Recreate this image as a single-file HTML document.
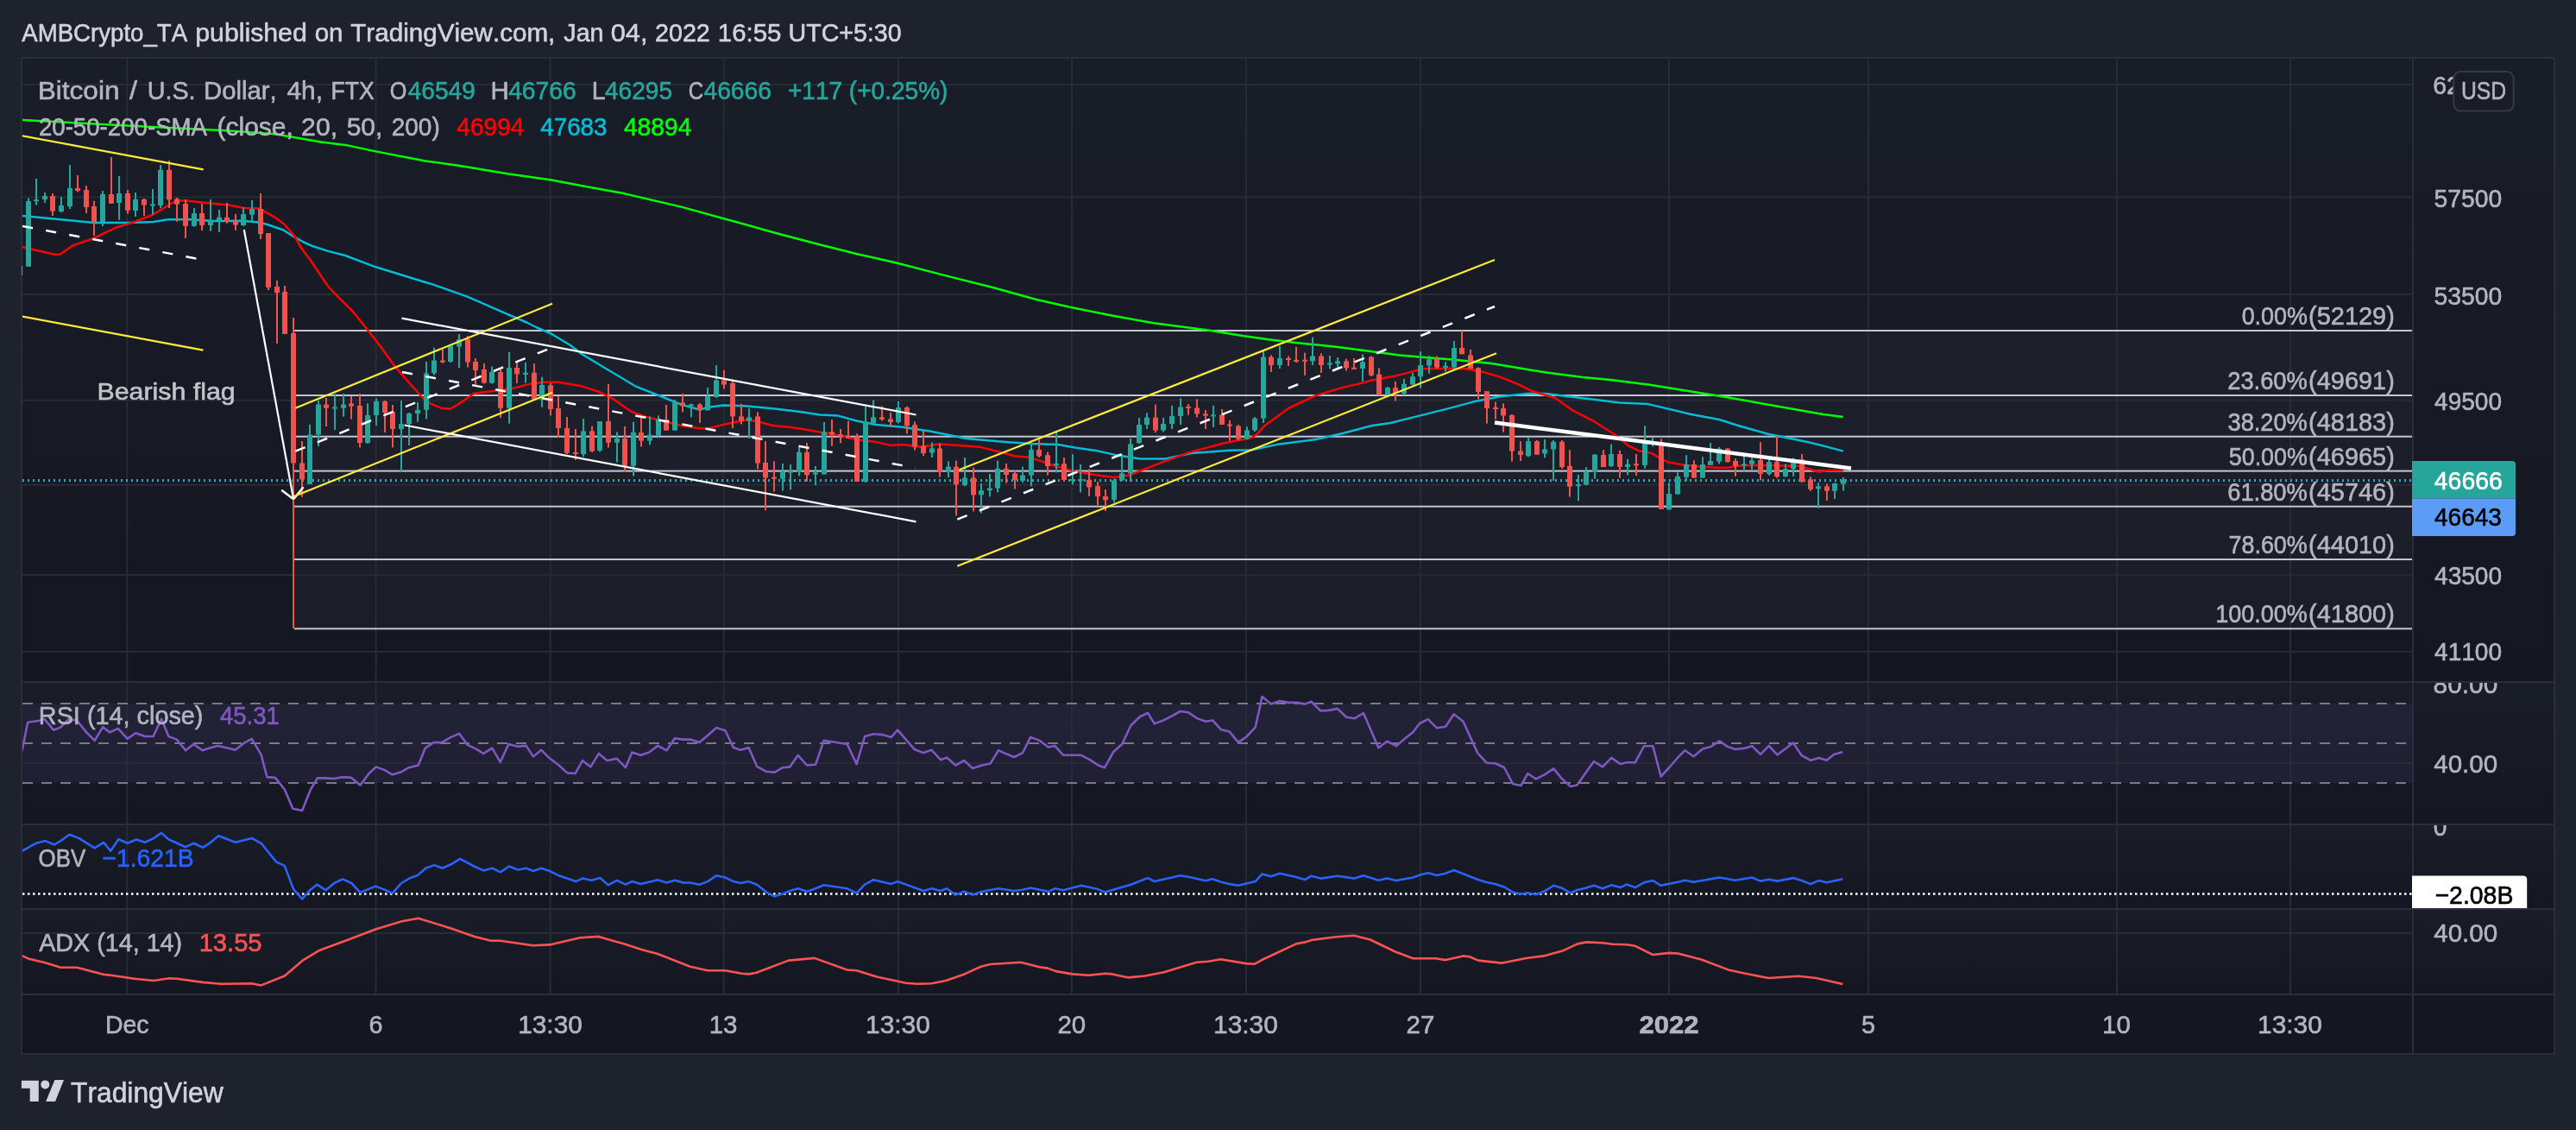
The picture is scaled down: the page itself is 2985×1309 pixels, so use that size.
<!DOCTYPE html>
<html><head><meta charset="utf-8"><style>
html,body{margin:0;padding:0;background:#1e222d;width:2985px;height:1309px;overflow:hidden}
svg{position:absolute;left:0;top:0;will-change:transform}
text{font-family:"Liberation Sans",sans-serif;white-space:pre;font-kerning:none}
</style></head><body>
<svg width="2985" height="1309" viewBox="0 0 2985 1309">
<rect x="24" y="66" width="2937" height="1156" fill="#2a2e39"/><defs><linearGradient id="bgg" x1="0" y1="0" x2="0" y2="1"><stop offset="0" stop-color="#191d28"/><stop offset="1" stop-color="#141721"/></linearGradient></defs><rect x="26" y="68" width="2933" height="721" fill="url(#bgg)"/><rect x="26" y="791" width="2933" height="163" fill="url(#bgg)"/><rect x="26" y="956" width="2933" height="96" fill="url(#bgg)"/><rect x="26" y="1054" width="2933" height="97" fill="url(#bgg)"/><rect x="26" y="1153" width="2933" height="67" fill="#141721"/><rect x="26" y="815" width="2769" height="92" fill="#7e57c2" fill-opacity="0.1"/><rect x="341" y="383" width="2454" height="345.5" fill="#ffffff" fill-opacity="0.028"/><g fill="#272b36"><rect x="146.3" y="68" width="2" height="1083"/><rect x="434.6" y="68" width="2" height="1083"/><rect x="636.7" y="68" width="2" height="1083"/><rect x="837.6" y="68" width="2" height="1083"/><rect x="1040.0" y="68" width="2" height="1083"/><rect x="1241.0" y="68" width="2" height="1083"/><rect x="1443.0" y="68" width="2" height="1083"/><rect x="1645.0" y="68" width="2" height="1083"/><rect x="1933.0" y="68" width="2" height="1083"/><rect x="2164.0" y="68" width="2" height="1083"/><rect x="2452.0" y="68" width="2" height="1083"/><rect x="2653.0" y="68" width="2" height="1083"/><rect x="26" y="97.0" width="2769" height="2"/><rect x="26" y="227.4" width="2769" height="2"/><rect x="26" y="340.0" width="2769" height="2"/><rect x="26" y="462.7" width="2769" height="2"/><rect x="26" y="560.6" width="2769" height="2"/><rect x="26" y="665.0" width="2769" height="2"/><rect x="26" y="753.9" width="2769" height="2"/><rect x="26" y="883" width="2769" height="2"/><rect x="26" y="1080" width="2769" height="2"/></g><line x1="26" y1="815" x2="2795" y2="815" stroke="#787b86" stroke-width="2" stroke-dasharray="12 10"/><line x1="26" y1="861" x2="2795" y2="861" stroke="#787b86" stroke-width="2" stroke-dasharray="12 10"/><line x1="26" y1="907" x2="2795" y2="907" stroke="#787b86" stroke-width="2" stroke-dasharray="12 10"/><defs><clipPath id="cm"><rect x="26" y="68" width="2769" height="721"/></clipPath><clipPath id="cr"><rect x="26" y="791" width="2769" height="163"/></clipPath><clipPath id="co"><rect x="26" y="956" width="2769" height="96"/></clipPath><clipPath id="ca"><rect x="26" y="1054" width="2769" height="97"/></clipPath><clipPath id="axr"><rect x="2797" y="791" width="162" height="163"/></clipPath><clipPath id="axo"><rect x="2795" y="956" width="164" height="96"/></clipPath></defs><g clip-path="url(#cm)"><rect x="341" y="382.0" width="2454" height="2" fill="#c3c6d0"/><rect x="341" y="457.0" width="2454" height="2" fill="#c3c6d0"/><rect x="341" y="504.7" width="2454" height="2" fill="#c3c6d0"/><rect x="341" y="544.6" width="2454" height="2" fill="#c3c6d0"/><rect x="341" y="585.7" width="2454" height="2" fill="#c3c6d0"/><rect x="341" y="647.0" width="2454" height="2" fill="#c3c6d0"/><rect x="341" y="727.3" width="2454" height="2" fill="#c3c6d0"/><line x1="26" y1="557.3" x2="2795" y2="557.3" stroke="#5b9cf6" stroke-width="1.5" stroke-dasharray="2 4"/><line x1="26" y1="556" x2="2795" y2="556" stroke="#26a69a" stroke-width="2" stroke-dasharray="2 4"/><polyline points="25.2,138.9 132.8,144.7 185.9,147.4 265.5,151.4 318.6,155.3 334.6,158.0 371.7,164.6 400.0,167.9 435.4,175.4 492.9,186.5 532.7,192.0 588.0,201.3 638.9,208.6 681.0,216.4 723.0,224.1 789.4,239.6 853.5,257.3 900.0,270.2 948.5,283.0 993.2,294.3 1039.8,304.7 1094.1,318.9 1152.3,333.5 1200.9,347.0 1239.7,355.8 1288.2,365.5 1336.7,374.2 1400.0,382.4 1439.9,389.1 1471.7,393.4 1503.6,397.2 1546.0,401.4 1590.0,407.2 1621.9,411.4 1653.7,414.2 1685.6,416.7 1728.0,421.0 1759.9,426.3 1791.7,431.6 1834.2,436.9 1866.0,440.1 1910.0,445.4 2000.0,460.0 2112.8,480.0 2135.8,482.9" fill="none" stroke="#00ff00" stroke-width="2.5" stroke-linejoin="round"/><polyline points="26.0,250.0 70.2,254.3 109.2,257.9 149.9,257.9 178.2,257.0 194.1,254.3 220.7,254.3 247.2,256.1 280.0,255.8 299.1,257.4 308.7,259.8 327.8,266.2 340.5,274.1 351.7,280.5 362.8,285.3 380.0,290.9 400.0,296.0 435.4,309.3 492.9,327.0 501.8,329.6 541.6,343.6 579.2,360.2 610.2,373.5 621.2,379.0 638.9,386.7 661.0,400.0 672.5,409.1 704.3,428.2 736.2,447.3 768.0,460.0 789.3,468.6 810.5,474.5 821.1,471.8 838.1,469.6 863.6,470.3 895.4,473.2 927.3,477.0 950.0,480.4 971.2,481.6 992.5,487.5 1013.7,491.8 1045.6,494.8 1077.4,499.6 1119.9,508.1 1162.4,511.7 1194.2,513.9 1226.0,515.1 1247.3,518.7 1270.0,522.0 1295.5,527.6 1321.0,531.4 1350.7,531.4 1380.4,525.0 1425.0,521.8 1450.5,521.2 1482.4,514.4 1524.8,509.1 1556.7,501.7 1590.0,493.0 1611.2,490.0 1636.7,483.6 1674.9,474.1 1706.8,465.6 1738.7,459.2 1770.5,456.0 1791.7,456.0 1813.0,458.8 1844.8,462.4 1876.7,466.6 1910.0,468.1 1959.8,480.0 1992.0,486.0 2015.0,493.2 2049.6,503.0 2072.6,507.6 2095.6,512.2 2116.3,517.4 2135.8,522.6" fill="none" stroke="#00bcd4" stroke-width="2.5" stroke-linejoin="round"/><polyline points="26.0,286.2 63.2,294.7 69.4,294.7 84.4,284.4 107.4,276.5 135.7,263.2 153.4,257.9 176.4,249.0 203.0,233.0 213.6,232.2 238.4,234.9 265.0,237.5 282.6,241.0 300.7,241.5 311.8,247.9 319.8,252.6 329.4,259.8 340.5,272.5 350.0,288.5 359.6,301.2 369.2,315.5 380.0,331.5 388.0,340.0 409.2,361.2 426.2,382.5 441.0,401.6 458.0,425.0 472.9,442.0 489.9,461.0 498.4,467.4 511.1,472.7 521.7,473.8 532.4,467.4 549.3,455.7 574.8,452.5 596.0,449.4 613.0,445.1 630.0,442.7 647.0,442.7 672.5,446.9 693.7,453.7 710.7,462.2 731.9,477.0 746.8,482.4 768.0,487.7 789.3,493.0 810.5,496.2 821.1,496.2 842.4,490.9 863.6,486.6 876.3,487.7 895.4,493.0 916.7,495.1 931.6,497.2 950.0,500.4 971.2,503.9 992.5,509.2 1013.7,511.7 1032.8,516.0 1045.6,515.1 1066.8,517.7 1088.0,514.5 1119.9,516.6 1136.9,518.1 1162.4,524.5 1175.1,528.3 1190.0,529.4 1204.8,533.6 1226.0,541.0 1247.3,546.4 1270.0,550.3 1291.2,553.0 1308.2,550.5 1338.0,538.8 1376.2,524.6 1418.7,513.3 1450.5,507.0 1456.9,502.7 1465.4,493.2 1493.0,473.0 1524.8,458.1 1556.7,448.6 1571.6,445.4 1590.0,440.5 1615.5,435.8 1632.5,431.6 1647.3,427.3 1664.3,426.9 1696.2,426.9 1717.4,430.5 1738.7,436.9 1759.9,445.4 1774.8,452.8 1802.4,461.3 1823.6,476.2 1844.8,486.8 1870.3,502.7 1887.3,516.5 1900.0,522.6 1913.8,524.9 1923.0,530.6 1932.2,535.2 1950.6,538.4 1969.0,540.4 1992.0,542.1 2003.5,541.6 2015.0,539.6 2038.0,538.9 2061.0,539.6 2084.0,539.8 2095.6,543.0 2107.0,546.5 2118.6,545.0 2135.8,545.0" fill="none" stroke="#ff0000" stroke-width="2.5" stroke-linejoin="round"/><g fill="#26a69a"><rect x="32" y="229.6" width="2" height="79.4"/><rect x="30" y="233.0" width="6" height="75.8"/><rect x="41" y="207.0" width="2" height="30.5"/><rect x="39" y="231.2" width="6" height="2.0"/><rect x="51" y="223.0" width="2" height="12.0"/><rect x="49" y="227.0" width="6" height="4.0"/><rect x="70" y="228.0" width="2" height="18.0"/><rect x="68" y="238.0" width="6" height="7.0"/><rect x="80" y="191.0" width="2" height="51.0"/><rect x="78" y="218.0" width="6" height="21.0"/><rect x="118" y="221.0" width="2" height="41.0"/><rect x="116" y="225.0" width="6" height="32.0"/><rect x="137" y="204.0" width="2" height="50.7"/><rect x="135" y="224.0" width="6" height="11.0"/><rect x="156" y="223.0" width="2" height="28.0"/><rect x="154" y="231.0" width="6" height="13.0"/><rect x="176" y="219.0" width="2" height="29.7"/><rect x="174" y="236.5" width="6" height="2.0"/><rect x="185" y="191.0" width="2" height="50.0"/><rect x="183" y="196.8" width="6" height="41.2"/><rect x="224" y="241.0" width="2" height="21.8"/><rect x="222" y="247.0" width="6" height="14.8"/><rect x="243" y="231.0" width="2" height="36.6"/><rect x="241" y="255.0" width="6" height="6.0"/><rect x="253" y="243.0" width="2" height="26.0"/><rect x="251" y="251.7" width="6" height="3.3"/><rect x="281" y="240.0" width="2" height="21.8"/><rect x="279" y="248.0" width="6" height="13.0"/><rect x="291" y="232.0" width="2" height="24.5"/><rect x="289" y="242.0" width="6" height="6.7"/><rect x="358" y="491.8" width="2" height="69.0"/><rect x="356" y="503.5" width="6" height="57.3"/><rect x="368" y="464.0" width="2" height="53.0"/><rect x="366" y="468.5" width="6" height="35.0"/><rect x="387" y="456.0" width="2" height="42.0"/><rect x="385" y="471.5" width="6" height="2.0"/><rect x="397" y="456.0" width="2" height="26.7"/><rect x="395" y="468.5" width="6" height="4.2"/><rect x="425" y="467.4" width="2" height="46.6"/><rect x="423" y="481.0" width="6" height="32.0"/><rect x="435" y="461.5" width="2" height="31.5"/><rect x="433" y="464.9" width="6" height="16.1"/><rect x="464" y="464.0" width="2" height="82.0"/><rect x="462" y="491.0" width="6" height="6.0"/><rect x="473" y="478.0" width="2" height="38.0"/><rect x="471" y="479.0" width="6" height="12.0"/><rect x="483" y="466.0" width="2" height="22.7"/><rect x="481" y="474.8" width="6" height="4.2"/><rect x="493" y="419.0" width="2" height="66.5"/><rect x="491" y="432.4" width="6" height="42.4"/><rect x="502" y="402.6" width="2" height="31.9"/><rect x="500" y="417.5" width="6" height="14.9"/><rect x="521" y="399.5" width="2" height="20.5"/><rect x="519" y="400.5" width="6" height="18.5"/><rect x="531" y="387.0" width="2" height="39.0"/><rect x="529" y="393.0" width="6" height="8.6"/><rect x="569" y="424.5" width="2" height="20.0"/><rect x="567" y="431.0" width="6" height="12.6"/><rect x="589" y="408.0" width="2" height="82.8"/><rect x="587" y="426.0" width="6" height="46.7"/><rect x="608" y="420.0" width="2" height="23.6"/><rect x="606" y="431.9" width="6" height="2.0"/><rect x="627" y="436.6" width="2" height="35.1"/><rect x="625" y="446.0" width="6" height="16.7"/><rect x="675" y="485.0" width="2" height="44.0"/><rect x="673" y="499.4" width="6" height="26.6"/><rect x="694" y="488.0" width="2" height="35.4"/><rect x="692" y="488.0" width="6" height="34.0"/><rect x="714" y="500.4" width="2" height="35.1"/><rect x="712" y="507.9" width="6" height="4.8"/><rect x="733" y="488.7" width="2" height="62.7"/><rect x="731" y="500.9" width="6" height="38.8"/><rect x="752" y="482.4" width="2" height="32.9"/><rect x="750" y="503.6" width="6" height="7.0"/><rect x="762" y="481.3" width="2" height="24.4"/><rect x="760" y="486.0" width="6" height="18.7"/><rect x="781" y="463.0" width="2" height="35.7"/><rect x="779" y="466.4" width="6" height="32.3"/><rect x="800" y="467.5" width="2" height="15.9"/><rect x="798" y="468.5" width="6" height="2.0"/><rect x="819" y="449.0" width="2" height="26.4"/><rect x="817" y="459.0" width="6" height="16.4"/><rect x="829" y="423.0" width="2" height="38.0"/><rect x="827" y="440.5" width="6" height="19.5"/><rect x="867" y="473.0" width="2" height="34.9"/><rect x="865" y="483.4" width="6" height="4.3"/><rect x="906" y="537.0" width="2" height="31.4"/><rect x="904" y="546.0" width="6" height="8.6"/><rect x="915" y="538.0" width="2" height="29.3"/><rect x="913" y="545.5" width="6" height="2.0"/><rect x="925" y="517.0" width="2" height="34.4"/><rect x="923" y="523.8" width="6" height="23.2"/><rect x="944" y="540.0" width="2" height="22.0"/><rect x="942" y="547.5" width="6" height="2.0"/><rect x="954" y="489.0" width="2" height="60.5"/><rect x="952" y="500.3" width="6" height="49.2"/><rect x="1002" y="470.5" width="2" height="88.5"/><rect x="1000" y="488.4" width="6" height="69.6"/><rect x="1011" y="463.5" width="2" height="27.5"/><rect x="1009" y="483.3" width="6" height="7.2"/><rect x="1040" y="465.0" width="2" height="25.5"/><rect x="1038" y="472.0" width="6" height="17.0"/><rect x="1079" y="512.4" width="2" height="17.6"/><rect x="1077" y="519.4" width="6" height="5.1"/><rect x="1098" y="534.2" width="2" height="19.2"/><rect x="1096" y="540.6" width="6" height="5.8"/><rect x="1117" y="530.0" width="2" height="33.3"/><rect x="1115" y="553.4" width="6" height="8.5"/><rect x="1136" y="560.0" width="2" height="34.6"/><rect x="1134" y="568.2" width="6" height="5.1"/><rect x="1146" y="549.0" width="2" height="26.4"/><rect x="1144" y="565.5" width="6" height="2.7"/><rect x="1155" y="533.6" width="2" height="36.8"/><rect x="1153" y="542.7" width="6" height="22.8"/><rect x="1184" y="540.6" width="2" height="18.4"/><rect x="1182" y="550.6" width="6" height="6.4"/><rect x="1194" y="512.4" width="2" height="50.9"/><rect x="1192" y="520.9" width="6" height="29.7"/><rect x="1223" y="500.3" width="2" height="47.1"/><rect x="1221" y="537.0" width="6" height="2.0"/><rect x="1242" y="526.2" width="2" height="35.0"/><rect x="1240" y="555.0" width="6" height="2.0"/><rect x="1251" y="537.9" width="2" height="32.5"/><rect x="1249" y="555.0" width="6" height="2.0"/><rect x="1290" y="554.7" width="2" height="27.7"/><rect x="1288" y="556.5" width="6" height="22.7"/><rect x="1299" y="526.0" width="2" height="31.0"/><rect x="1297" y="548.4" width="6" height="8.1"/><rect x="1309" y="508.0" width="2" height="50.0"/><rect x="1307" y="514.4" width="6" height="34.0"/><rect x="1319" y="484.0" width="2" height="30.0"/><rect x="1317" y="492.0" width="6" height="21.3"/><rect x="1328" y="478.3" width="2" height="18.7"/><rect x="1326" y="483.6" width="6" height="8.4"/><rect x="1347" y="484.0" width="2" height="16.6"/><rect x="1345" y="491.0" width="6" height="7.5"/><rect x="1357" y="469.8" width="2" height="27.2"/><rect x="1355" y="482.0" width="6" height="9.0"/><rect x="1367" y="461.3" width="2" height="30.7"/><rect x="1365" y="471.5" width="6" height="10.5"/><rect x="1405" y="469.8" width="2" height="25.1"/><rect x="1403" y="480.5" width="6" height="2.0"/><rect x="1444" y="494.2" width="2" height="14.8"/><rect x="1442" y="498.5" width="6" height="10.0"/><rect x="1453" y="483.0" width="2" height="17.0"/><rect x="1451" y="484.7" width="6" height="13.8"/><rect x="1463" y="405.0" width="2" height="85.0"/><rect x="1461" y="413.5" width="6" height="71.2"/><rect x="1482" y="400.8" width="2" height="26.2"/><rect x="1480" y="415.0" width="6" height="8.0"/><rect x="1520" y="390.8" width="2" height="32.2"/><rect x="1518" y="412.5" width="6" height="5.9"/><rect x="1540" y="412.0" width="2" height="15.3"/><rect x="1538" y="420.5" width="6" height="2.0"/><rect x="1549" y="414.0" width="2" height="11.6"/><rect x="1547" y="418.4" width="6" height="3.0"/><rect x="1578" y="410.3" width="2" height="31.7"/><rect x="1576" y="419.3" width="6" height="7.7"/><rect x="1607" y="448.0" width="2" height="10.0"/><rect x="1605" y="449.0" width="6" height="8.5"/><rect x="1626" y="439.0" width="2" height="18.5"/><rect x="1624" y="444.8" width="6" height="11.2"/><rect x="1636" y="432.0" width="2" height="14.0"/><rect x="1634" y="436.3" width="6" height="9.1"/><rect x="1645" y="407.0" width="2" height="42.6"/><rect x="1643" y="423.0" width="6" height="13.3"/><rect x="1655" y="412.0" width="2" height="20.6"/><rect x="1653" y="416.3" width="6" height="7.2"/><rect x="1674" y="419.3" width="2" height="11.2"/><rect x="1672" y="423.8" width="6" height="2.0"/><rect x="1684" y="395.0" width="2" height="33.4"/><rect x="1682" y="403.0" width="6" height="22.6"/><rect x="1770" y="507.0" width="2" height="22.3"/><rect x="1768" y="511.2" width="6" height="17.0"/><rect x="1789" y="509.0" width="2" height="21.3"/><rect x="1787" y="520.4" width="6" height="5.0"/><rect x="1799" y="510.0" width="2" height="46.9"/><rect x="1797" y="511.9" width="6" height="8.5"/><rect x="1828" y="550.0" width="2" height="30.2"/><rect x="1826" y="561.2" width="6" height="2.0"/><rect x="1837" y="541.0" width="2" height="21.2"/><rect x="1835" y="546.3" width="6" height="15.2"/><rect x="1847" y="526.0" width="2" height="28.7"/><rect x="1845" y="526.7" width="6" height="19.6"/><rect x="1866" y="514.4" width="2" height="26.6"/><rect x="1864" y="526.0" width="6" height="13.9"/><rect x="1885" y="531.8" width="2" height="18.7"/><rect x="1883" y="537.8" width="6" height="3.2"/><rect x="1905" y="493.2" width="2" height="49.5"/><rect x="1903" y="513.4" width="6" height="25.5"/><rect x="1914" y="507.0" width="2" height="10.4"/><rect x="1912" y="511.8" width="6" height="2.0"/><rect x="1933" y="559.0" width="2" height="31.4"/><rect x="1931" y="572.0" width="6" height="18.2"/><rect x="1943" y="547.3" width="2" height="25.3"/><rect x="1941" y="551.9" width="6" height="20.7"/><rect x="1953" y="527.2" width="2" height="30.1"/><rect x="1951" y="538.0" width="6" height="14.7"/><rect x="1972" y="529.2" width="2" height="24.4"/><rect x="1970" y="538.0" width="6" height="15.6"/><rect x="1981" y="513.0" width="2" height="25.9"/><rect x="1979" y="534.0" width="6" height="4.9"/><rect x="1991" y="518.0" width="2" height="19.5"/><rect x="1989" y="519.7" width="6" height="14.9"/><rect x="2020" y="527.2" width="2" height="18.4"/><rect x="2018" y="537.4" width="6" height="2.0"/><rect x="2029" y="530.4" width="2" height="13.5"/><rect x="2027" y="533.5" width="6" height="4.0"/><rect x="2049" y="529.5" width="2" height="21.3"/><rect x="2047" y="535.2" width="6" height="13.8"/><rect x="2068" y="537.3" width="2" height="15.4"/><rect x="2066" y="543.0" width="6" height="8.9"/><rect x="2077" y="530.4" width="2" height="21.5"/><rect x="2075" y="531.8" width="6" height="11.2"/><rect x="2106" y="559.2" width="2" height="29.5"/><rect x="2104" y="563.4" width="6" height="2.9"/><rect x="2125" y="559.2" width="2" height="18.8"/><rect x="2123" y="560.0" width="6" height="8.6"/><rect x="2135" y="553.0" width="2" height="15.6"/><rect x="2133" y="555.4" width="6" height="5.1"/></g><g fill="#ef5350"><rect x="60" y="224.0" width="2" height="26.0"/><rect x="58" y="227.0" width="6" height="17.6"/><rect x="89" y="203.0" width="2" height="19.5"/><rect x="87" y="218.0" width="6" height="3.0"/><rect x="99" y="215.0" width="2" height="32.0"/><rect x="97" y="220.0" width="6" height="20.0"/><rect x="108" y="232.7" width="2" height="40.3"/><rect x="106" y="239.0" width="6" height="18.0"/><rect x="128" y="182.0" width="2" height="54.0"/><rect x="126" y="225.0" width="6" height="10.8"/><rect x="147" y="220.0" width="2" height="27.6"/><rect x="145" y="224.0" width="6" height="19.7"/><rect x="166" y="230.0" width="2" height="20.0"/><rect x="164" y="231.0" width="6" height="6.5"/><rect x="195" y="186.0" width="2" height="55.0"/><rect x="193" y="196.8" width="6" height="34.5"/><rect x="204" y="229.0" width="2" height="28.0"/><rect x="202" y="230.4" width="6" height="6.2"/><rect x="214" y="231.0" width="2" height="45.0"/><rect x="212" y="236.0" width="6" height="25.8"/><rect x="233" y="236.0" width="2" height="31.0"/><rect x="231" y="247.0" width="6" height="14.0"/><rect x="262" y="235.0" width="2" height="23.8"/><rect x="260" y="251.7" width="6" height="5.3"/><rect x="272" y="248.0" width="2" height="19.0"/><rect x="270" y="255.8" width="6" height="4.7"/><rect x="301" y="224.0" width="2" height="53.0"/><rect x="299" y="242.0" width="6" height="29.0"/><rect x="310" y="270.0" width="2" height="66.0"/><rect x="308" y="270.0" width="6" height="63.0"/><rect x="320" y="325.0" width="2" height="73.0"/><rect x="318" y="332.0" width="6" height="7.0"/><rect x="329" y="331.0" width="2" height="56.0"/><rect x="327" y="338.0" width="6" height="49.0"/><rect x="339" y="368.0" width="2" height="360.0"/><rect x="337" y="386.0" width="6" height="150.4"/><rect x="349" y="511.0" width="2" height="64.7"/><rect x="347" y="536.4" width="6" height="19.1"/><rect x="377" y="461.0" width="2" height="33.0"/><rect x="375" y="468.5" width="6" height="4.2"/><rect x="406" y="459.0" width="2" height="26.5"/><rect x="404" y="467.4" width="6" height="3.2"/><rect x="416" y="456.0" width="2" height="62.4"/><rect x="414" y="470.0" width="6" height="43.0"/><rect x="445" y="464.0" width="2" height="37.0"/><rect x="443" y="464.9" width="6" height="13.1"/><rect x="454" y="469.0" width="2" height="49.4"/><rect x="452" y="477.0" width="6" height="20.0"/><rect x="512" y="404.8" width="2" height="15.9"/><rect x="510" y="417.5" width="6" height="2.1"/><rect x="541" y="389.0" width="2" height="36.4"/><rect x="539" y="393.0" width="6" height="26.6"/><rect x="550" y="415.0" width="2" height="31.0"/><rect x="548" y="419.0" width="6" height="10.0"/><rect x="560" y="421.0" width="2" height="23.5"/><rect x="558" y="428.0" width="6" height="15.6"/><rect x="579" y="427.5" width="2" height="56.5"/><rect x="577" y="431.0" width="6" height="41.7"/><rect x="598" y="419.6" width="2" height="24.4"/><rect x="596" y="426.0" width="6" height="7.4"/><rect x="618" y="421.0" width="2" height="42.6"/><rect x="616" y="431.7" width="6" height="31.0"/><rect x="637" y="444.0" width="2" height="37.3"/><rect x="635" y="446.3" width="6" height="27.6"/><rect x="646" y="459.0" width="2" height="47.8"/><rect x="644" y="473.0" width="6" height="23.0"/><rect x="656" y="483.0" width="2" height="43.0"/><rect x="654" y="496.0" width="6" height="28.8"/><rect x="666" y="497.0" width="2" height="36.0"/><rect x="664" y="524.0" width="6" height="2.0"/><rect x="685" y="493.6" width="2" height="30.2"/><rect x="683" y="499.4" width="6" height="23.3"/><rect x="704" y="445.0" width="2" height="73.5"/><rect x="702" y="488.0" width="6" height="24.7"/><rect x="723" y="494.0" width="2" height="53.0"/><rect x="721" y="507.9" width="6" height="31.8"/><rect x="742" y="483.0" width="2" height="34.4"/><rect x="740" y="500.9" width="6" height="9.7"/><rect x="771" y="469.0" width="2" height="29.7"/><rect x="769" y="486.0" width="6" height="12.7"/><rect x="790" y="456.0" width="2" height="21.5"/><rect x="788" y="466.4" width="6" height="3.9"/><rect x="810" y="467.0" width="2" height="22.8"/><rect x="808" y="468.6" width="6" height="6.8"/><rect x="838" y="428.9" width="2" height="21.6"/><rect x="836" y="440.5" width="6" height="5.1"/><rect x="848" y="441.4" width="2" height="54.6"/><rect x="846" y="444.0" width="6" height="38.4"/><rect x="858" y="468.0" width="2" height="23.5"/><rect x="856" y="482.4" width="6" height="5.3"/><rect x="877" y="477.5" width="2" height="65.8"/><rect x="875" y="482.4" width="6" height="54.1"/><rect x="886" y="511.0" width="2" height="80.3"/><rect x="884" y="536.0" width="6" height="17.5"/><rect x="896" y="534.4" width="2" height="35.0"/><rect x="894" y="552.8" width="6" height="2.0"/><rect x="934" y="513.0" width="2" height="44.8"/><rect x="932" y="523.8" width="6" height="26.5"/><rect x="963" y="486.0" width="2" height="30.6"/><rect x="961" y="500.3" width="6" height="2.9"/><rect x="973" y="496.9" width="2" height="16.5"/><rect x="971" y="503.2" width="6" height="2.2"/><rect x="982" y="487.5" width="2" height="20.5"/><rect x="980" y="505.0" width="6" height="2.5"/><rect x="992" y="502.4" width="2" height="55.6"/><rect x="990" y="505.4" width="6" height="52.6"/><rect x="1021" y="470.5" width="2" height="17.0"/><rect x="1019" y="483.3" width="6" height="2.5"/><rect x="1031" y="477.8" width="2" height="16.9"/><rect x="1029" y="485.4" width="6" height="3.6"/><rect x="1050" y="470.5" width="2" height="31.9"/><rect x="1048" y="472.0" width="6" height="21.3"/><rect x="1059" y="488.4" width="2" height="33.1"/><rect x="1057" y="492.2" width="6" height="25.5"/><rect x="1069" y="499.0" width="2" height="28.9"/><rect x="1067" y="516.6" width="6" height="8.4"/><rect x="1088" y="513.4" width="2" height="39.3"/><rect x="1086" y="519.4" width="6" height="27.0"/><rect x="1107" y="533.6" width="2" height="63.7"/><rect x="1105" y="540.6" width="6" height="20.6"/><rect x="1127" y="541.5" width="2" height="50.9"/><rect x="1125" y="553.4" width="6" height="19.9"/><rect x="1165" y="536.8" width="2" height="22.9"/><rect x="1163" y="542.7" width="6" height="7.3"/><rect x="1175" y="545.3" width="2" height="21.2"/><rect x="1173" y="548.5" width="6" height="7.4"/><rect x="1203" y="509.2" width="2" height="20.8"/><rect x="1201" y="520.9" width="6" height="7.4"/><rect x="1213" y="523.6" width="2" height="27.0"/><rect x="1211" y="527.2" width="6" height="12.8"/><rect x="1232" y="530.0" width="2" height="27.6"/><rect x="1230" y="537.2" width="6" height="18.7"/><rect x="1261" y="543.2" width="2" height="31.4"/><rect x="1259" y="555.9" width="6" height="8.5"/><rect x="1271" y="558.0" width="2" height="27.5"/><rect x="1269" y="563.2" width="6" height="11.8"/><rect x="1280" y="567.0" width="2" height="25.0"/><rect x="1278" y="575.0" width="6" height="4.2"/><rect x="1338" y="468.7" width="2" height="32.5"/><rect x="1336" y="483.6" width="6" height="14.9"/><rect x="1376" y="468.0" width="2" height="12.8"/><rect x="1374" y="470.9" width="6" height="2.0"/><rect x="1386" y="462.4" width="2" height="21.2"/><rect x="1384" y="472.4" width="6" height="7.0"/><rect x="1396" y="475.0" width="2" height="22.0"/><rect x="1394" y="479.4" width="6" height="2.1"/><rect x="1415" y="474.0" width="2" height="18.0"/><rect x="1413" y="480.4" width="6" height="11.6"/><rect x="1424" y="486.8" width="2" height="23.8"/><rect x="1422" y="491.6" width="6" height="2.0"/><rect x="1434" y="492.0" width="2" height="17.7"/><rect x="1432" y="493.6" width="6" height="14.9"/><rect x="1472" y="411.4" width="2" height="19.6"/><rect x="1470" y="413.5" width="6" height="9.5"/><rect x="1492" y="412.5" width="2" height="11.5"/><rect x="1490" y="415.0" width="6" height="2.0"/><rect x="1501" y="401.9" width="2" height="18.1"/><rect x="1499" y="416.9" width="6" height="2.0"/><rect x="1511" y="408.6" width="2" height="26.2"/><rect x="1509" y="416.7" width="6" height="2.0"/><rect x="1530" y="409.3" width="2" height="22.7"/><rect x="1528" y="412.5" width="6" height="10.5"/><rect x="1559" y="415.7" width="2" height="13.8"/><rect x="1557" y="418.4" width="6" height="7.9"/><rect x="1568" y="415.0" width="2" height="13.0"/><rect x="1566" y="425.8" width="6" height="2.0"/><rect x="1588" y="412.5" width="2" height="23.5"/><rect x="1586" y="413.5" width="6" height="21.3"/><rect x="1597" y="426.3" width="2" height="31.2"/><rect x="1595" y="433.7" width="6" height="23.8"/><rect x="1616" y="442.0" width="2" height="22.5"/><rect x="1614" y="449.0" width="6" height="6.4"/><rect x="1664" y="412.5" width="2" height="14.5"/><rect x="1662" y="415.7" width="6" height="9.9"/><rect x="1693" y="383.0" width="2" height="27.3"/><rect x="1691" y="403.0" width="6" height="7.3"/><rect x="1703" y="405.0" width="2" height="22.3"/><rect x="1701" y="411.4" width="6" height="15.6"/><rect x="1712" y="425.6" width="2" height="36.8"/><rect x="1710" y="426.3" width="6" height="27.6"/><rect x="1722" y="453.2" width="2" height="37.4"/><rect x="1720" y="453.2" width="6" height="19.8"/><rect x="1732" y="465.6" width="2" height="20.1"/><rect x="1730" y="472.0" width="6" height="2.0"/><rect x="1741" y="467.3" width="2" height="33.3"/><rect x="1739" y="473.0" width="6" height="8.5"/><rect x="1751" y="480.0" width="2" height="54.6"/><rect x="1749" y="480.9" width="6" height="41.6"/><rect x="1761" y="511.2" width="2" height="22.8"/><rect x="1759" y="522.5" width="6" height="4.5"/><rect x="1780" y="510.0" width="2" height="16.7"/><rect x="1778" y="511.2" width="6" height="15.5"/><rect x="1809" y="510.0" width="2" height="33.0"/><rect x="1807" y="511.9" width="6" height="29.1"/><rect x="1818" y="521.2" width="2" height="54.4"/><rect x="1816" y="539.9" width="6" height="23.8"/><rect x="1857" y="521.2" width="2" height="19.8"/><rect x="1855" y="527.0" width="6" height="14.0"/><rect x="1876" y="521.8" width="2" height="31.9"/><rect x="1874" y="526.0" width="6" height="15.0"/><rect x="1895" y="526.0" width="2" height="25.0"/><rect x="1893" y="537.2" width="6" height="2.0"/><rect x="1924" y="508.2" width="2" height="81.7"/><rect x="1922" y="512.2" width="6" height="77.7"/><rect x="1962" y="533.2" width="2" height="20.4"/><rect x="1960" y="538.0" width="6" height="15.6"/><rect x="2001" y="519.0" width="2" height="16.8"/><rect x="1999" y="519.7" width="6" height="15.5"/><rect x="2010" y="531.2" width="2" height="20.7"/><rect x="2008" y="534.0" width="6" height="5.8"/><rect x="2039" y="512.2" width="2" height="44.3"/><rect x="2037" y="532.9" width="6" height="16.1"/><rect x="2058" y="504.2" width="2" height="49.4"/><rect x="2056" y="535.0" width="6" height="17.2"/><rect x="2087" y="526.0" width="2" height="32.8"/><rect x="2085" y="532.0" width="6" height="26.2"/><rect x="2097" y="552.2" width="2" height="16.6"/><rect x="2095" y="555.4" width="6" height="11.5"/><rect x="2116" y="560.3" width="2" height="19.6"/><rect x="2114" y="563.4" width="6" height="5.2"/></g><line x1="20" y1="156.3" x2="235.7" y2="196.3" stroke="#ffeb3b" stroke-width="2.2" stroke-linecap="butt"/><line x1="20" y1="365.4" x2="235.4" y2="405.6" stroke="#ffeb3b" stroke-width="2.2" stroke-linecap="butt"/><line x1="20" y1="260.8" x2="227.8" y2="299.5" stroke="#ffffff" stroke-width="2.5" stroke-dasharray="12.2 15.3" stroke-dashoffset="21.3" stroke-linecap="butt"/><line x1="282.8" y1="266" x2="340.1" y2="578.2" stroke="#ffffff" stroke-width="2.2" stroke-linecap="butt"/><line x1="326.3" y1="567.8" x2="340.1" y2="578.2" stroke="#ffffff" stroke-width="2.5" stroke-linecap="butt"/><line x1="351.6" y1="564.3" x2="340.1" y2="578.2" stroke="#ffffff" stroke-width="2.5" stroke-linecap="butt"/><line x1="342.3" y1="472.7" x2="640" y2="351.7" stroke="#ffeb3b" stroke-width="2.2" stroke-linecap="butt"/><line x1="341.2" y1="574.7" x2="640" y2="454.7" stroke="#ffeb3b" stroke-width="2.2" stroke-linecap="butt"/><line x1="342.3" y1="522.6" x2="634.3" y2="404.8" stroke="#ffffff" stroke-width="2.5" stroke-dasharray="12.2 15.3" stroke-dashoffset="0" stroke-linecap="butt"/><line x1="465.5" y1="368.7" x2="1061.5" y2="480.5" stroke="#ffffff" stroke-width="2.2" stroke-linecap="butt"/><line x1="468.7" y1="492.5" x2="1061.5" y2="604.3" stroke="#ffffff" stroke-width="2.2" stroke-linecap="butt"/><line x1="466" y1="431" x2="1061" y2="542" stroke="#ffffff" stroke-width="2.5" stroke-dasharray="12.2 15.3" stroke-dashoffset="0" stroke-linecap="butt"/><line x1="1111.4" y1="544.2" x2="1732" y2="301" stroke="#ffeb3b" stroke-width="2.2" stroke-linecap="butt"/><line x1="1109.3" y1="655.7" x2="1734" y2="409.3" stroke="#ffeb3b" stroke-width="2.2" stroke-linecap="butt"/><line x1="1109.3" y1="601.6" x2="1732" y2="355" stroke="#ffffff" stroke-width="2.5" stroke-dasharray="12.2 15.3" stroke-dashoffset="0" stroke-linecap="butt"/><line x1="1732" y1="489.5" x2="2145" y2="542.5" stroke="#ffffff" stroke-width="4.5" stroke-linecap="butt"/></g><rect x="25" y="308" width="1.2" height="11" fill="#26a69a"/><g clip-path="url(#cr)"><polyline points="25.4,870.2 32.2,836.7 45.8,834.8 51.3,832.9 62.1,845.7 70.3,842.4 79.8,832.9 89.3,834.8 100.2,848.4 109.7,857.9 119.2,842.2 127.3,848.4 136.8,843.8 147.7,855.8 157.2,849.2 168.1,853.0 177.6,853.0 187.1,832.9 195.3,853.0 204.8,856.6 215.1,869.3 224.3,862.0 234.7,869.3 242.8,866.6 252.3,863.9 261.8,866.1 272.7,868.8 282.2,861.2 291.7,855.8 302.6,874.2 309.4,900.1 318.9,900.9 329.8,914.5 339.3,936.7 350.2,938.9 359.7,915.0 367.8,901.4 377.3,901.4 386.8,902.0 397.7,900.1 407.2,900.9 417.3,909.6 427.6,896.0 435.8,888.4 445.3,891.9 454.8,897.3 464.3,894.6 473.8,889.2 484.7,886.5 492.8,866.6 502.3,860.1 511.8,860.1 522.7,853.9 532.2,849.8 541.7,862.8 551.3,867.4 560.2,872.9 570.3,866.6 579.8,882.9 589.3,862.0 600.2,864.7 609.7,863.9 617.8,876.4 627.3,868.8 636.8,878.3 647.7,886.5 657.2,895.4 666.7,896.0 674.9,881.0 684.4,888.4 693.9,872.9 703.4,881.0 714.9,878.9 724.9,889.2 732.3,871.5 742.6,874.8 752.1,871.5 762.2,863.9 772.5,869.3 782.0,855.2 791.5,856.6 799.7,856.6 810.5,860.1 820.0,852.0 830.1,843.0 840.4,846.3 850.0,866.1 858.1,868.8 867.6,866.1 877.1,887.8 888.0,893.8 897.5,894.6 907.0,889.2 915.2,888.4 924.7,874.8 935.0,886.5 945.1,885.7 954.6,857.9 964.1,859.3 981.7,862.0 992.6,885.1 1002.1,853.0 1012.2,850.3 1022.5,851.1 1032.8,853.9 1040.2,845.7 1049.7,856.6 1060.0,868.3 1070.1,872.1 1079.6,868.8 1089.9,880.2 1097.2,877.5 1107.3,886.5 1117.1,881.0 1127.1,890.0 1138.0,886.5 1147.5,884.6 1157.0,869.3 1165.2,872.9 1175.2,877.0 1185.0,872.1 1194.2,853.9 1204.6,857.9 1214.9,865.5 1222.2,863.9 1232.3,874.8 1242.6,874.8 1252.9,874.8 1263.0,880.2 1272.5,886.5 1280.1,889.2 1290.2,871.0 1300.2,862.0 1310.5,840.3 1320.9,830.2 1330.1,825.9 1337.7,838.4 1347.2,834.8 1358.1,829.4 1367.6,824.0 1377.1,825.3 1387.2,832.1 1397.0,835.7 1405.2,834.5 1415.1,845.3 1424.7,847.6 1434.9,859.9 1444.3,853.5 1454.7,842.4 1462.6,806.9 1472.8,815.6 1483.0,812.1 1493.2,813.9 1503.4,813.9 1512.1,815.6 1519.4,812.7 1530.4,823.5 1539.8,822.9 1549.9,820.9 1560.1,830.8 1569.7,832.2 1579.9,826.1 1597.4,866.3 1607.3,858.7 1617.8,864.2 1627.7,855.8 1637.3,848.2 1645.1,838.0 1654.8,833.1 1664.9,843.3 1675.1,841.8 1684.7,827.3 1695.5,835.7 1712.1,872.1 1722.6,883.7 1732.5,884.3 1743.0,889.0 1752.9,907.9 1762.5,910.0 1770.3,896.0 1779.9,902.4 1790.1,897.1 1800.3,890.4 1809.9,902.1 1819.8,911.1 1827.4,909.4 1837.3,895.4 1846.9,882.0 1857.1,888.4 1867.3,877.9 1877.5,884.9 1884.8,883.2 1894.9,883.2 1905.1,864.2 1915.3,864.2 1924.6,899.5 1934.3,889.0 1944.4,877.3 1952.6,869.2 1962.5,876.2 1973.0,867.4 1982.3,865.1 1992.5,858.4 2002.1,865.1 2010.8,868.0 2020.7,866.9 2030.3,864.2 2040.0,873.9 2049.8,864.0 2059.5,874.4 2069.0,867.2 2077.8,860.5 2087.7,875.0 2098.2,880.8 2107.5,877.9 2116.8,880.8 2125.0,873.9 2135.4,870.9" fill="none" stroke="#7e57c2" stroke-width="2.6" stroke-linejoin="round"/></g><g clip-path="url(#co)"><line x1="26" y1="1035.5" x2="2795" y2="1035.5" stroke="#ffffff" stroke-width="2.5" stroke-dasharray="2.5 3.5"/><polyline points="25.4,985.8 41.7,976.8 52.6,974.1 62.9,978.5 70.3,974.1 80.3,966.8 91.2,970.9 109.7,982.3 120.0,975.8 128.2,985.8 137.4,972.2 147.7,976.8 158.0,972.5 168.1,975.8 177.6,971.4 187.1,964.9 195.3,972.2 215.1,981.2 224.3,976.8 235.2,981.7 244.2,975.8 253.2,968.2 272.7,975.8 291.7,970.9 302.6,976.8 320.3,998.6 329.8,1002.9 340.1,1030.1 350.2,1041.5 359.1,1031.2 367.3,1024.7 377.3,1031.2 387.4,1023.0 397.2,1018.4 407.2,1023.0 417.3,1033.9 435.2,1026.6 444.5,1030.1 454.8,1034.7 465.1,1023.0 475.2,1017.1 484.1,1013.8 493.4,1005.7 503.2,1002.1 512.4,1005.7 522.7,1001.3 533.0,994.8 550.4,1004.0 560.2,1008.4 570.3,1005.7 579.8,1010.3 590.1,1003.5 600.2,1007.6 609.7,1005.7 617.8,1008.9 627.3,1005.7 636.8,1008.9 647.7,1014.3 657.2,1017.6 667.3,1021.1 674.9,1017.6 685.2,1019.8 695.3,1017.1 704.8,1025.2 714.9,1019.8 724.9,1024.7 732.3,1021.1 742.6,1023.9 762.2,1019.2 772.5,1022.5 782.0,1019.8 791.5,1022.5 799.7,1022.5 810.5,1024.7 820.0,1021.1 830.1,1014.3 840.4,1016.5 850.0,1021.1 858.1,1023.0 867.6,1021.1 877.1,1024.7 888.0,1033.4 897.5,1038.3 907.0,1035.5 915.2,1032.0 924.7,1029.3 935.0,1032.8 945.1,1029.3 954.6,1025.2 981.7,1029.3 992.6,1034.7 1002.1,1024.7 1012.2,1019.2 1032.8,1023.9 1040.2,1021.1 1070.1,1032.0 1079.6,1029.3 1089.9,1032.0 1097.2,1029.3 1107.3,1036.6 1117.1,1032.8 1127.1,1036.6 1138.0,1032.8 1157.0,1029.3 1175.2,1032.0 1185.0,1030.7 1194.2,1028.5 1214.9,1032.8 1222.2,1029.3 1232.3,1031.2 1252.9,1025.8 1272.5,1030.1 1280.1,1033.4 1310.5,1024.7 1330.1,1017.1 1337.7,1021.1 1367.6,1014.3 1377.1,1015.7 1397.0,1020.3 1405.2,1018.2 1415.1,1021.7 1424.7,1024.1 1434.9,1025.8 1454.7,1021.1 1462.6,1012.4 1472.8,1015.3 1483.0,1011.8 1501.9,1015.9 1512.1,1019.1 1519.4,1014.7 1530.4,1017.6 1549.9,1014.7 1569.7,1017.6 1579.9,1014.2 1597.4,1019.7 1607.3,1017.6 1617.8,1020.0 1637.3,1016.5 1645.1,1013.6 1654.8,1011.2 1664.9,1013.9 1675.1,1011.8 1684.7,1008.0 1712.1,1018.8 1722.6,1022.0 1732.5,1024.1 1743.0,1027.5 1752.9,1033.4 1762.5,1035.7 1770.3,1034.2 1779.9,1036.3 1790.1,1032.2 1800.3,1025.8 1809.9,1028.7 1819.8,1034.5 1827.4,1031.0 1837.3,1028.7 1846.9,1025.8 1857.1,1029.3 1867.3,1025.2 1877.5,1028.1 1884.8,1024.6 1894.9,1028.1 1905.1,1022.3 1915.3,1020.0 1924.6,1025.8 1944.4,1021.7 1952.6,1019.7 1962.5,1021.7 1992.5,1016.5 2010.8,1019.7 2030.3,1016.5 2040.0,1020.6 2049.8,1018.8 2059.5,1020.6 2077.8,1017.1 2087.7,1020.0 2098.2,1024.1 2107.5,1020.0 2116.8,1022.3 2135.4,1018.2" fill="none" stroke="#2962ff" stroke-width="2.6" stroke-linejoin="round"/></g><g clip-path="url(#ca)"><polyline points="25.4,1107.2 33.6,1110.7 52.6,1115.3 70.3,1120.8 89.3,1120.8 120.5,1128.9 128.7,1129.7 155.9,1133.8 177.6,1136.0 196.6,1133.3 204.8,1133.8 234.7,1137.9 256.4,1139.8 291.7,1139.2 302.6,1141.4 329.8,1130.5 351.5,1112.1 370.5,1100.7 400.4,1089.8 435.8,1076.2 465.7,1067.2 484.7,1063.7 522.7,1075.4 549.9,1084.9 568.9,1089.8 579.8,1089.8 617.8,1095.2 636.8,1094.4 672.2,1086.3 693.9,1084.9 710.0,1089.8 723.6,1093.6 742.6,1099.8 763.0,1105.3 799.7,1119.7 820.1,1124.3 840.4,1124.3 859.5,1127.8 867.6,1128.4 875.8,1127.0 913.8,1112.6 943.7,1109.9 981.7,1123.5 992.6,1124.3 1014.3,1131.1 1049.7,1138.7 1063.3,1139.8 1079.6,1139.2 1095.9,1136.0 1117.6,1128.4 1136.6,1119.7 1147.5,1117.0 1182.8,1114.8 1204.6,1120.2 1214.1,1121.6 1223.6,1125.1 1242.6,1128.4 1261.6,1129.7 1280.7,1127.8 1288.8,1128.4 1307.8,1132.4 1326.8,1130.5 1348.6,1126.2 1386.6,1114.8 1400.0,1113.8 1414.6,1111.2 1443.7,1116.1 1453.9,1116.7 1462.6,1111.8 1481.5,1103.0 1501.9,1093.4 1512.1,1091.4 1520.8,1088.8 1548.5,1085.3 1568.9,1083.8 1587.8,1088.5 1616.9,1102.5 1637.3,1110.3 1663.5,1110.3 1675.1,1112.1 1695.5,1107.4 1702.8,1108.3 1713.0,1112.6 1740.6,1115.6 1769.8,1109.7 1788.7,1107.4 1810.5,1101.6 1828.0,1093.4 1838.2,1091.4 1857.1,1092.3 1868.7,1093.7 1884.8,1094.3 1894.9,1095.8 1915.3,1106.0 1934.3,1103.9 1944.4,1104.5 1972.1,1111.8 2002.7,1123.4 2020.1,1127.2 2049.3,1133.0 2084.2,1130.7 2104.6,1133.0 2135.4,1140.0" fill="none" stroke="#ff5252" stroke-width="2.6" stroke-linejoin="round"/></g><rect x="26" y="789" width="2933" height="2" fill="#2a2e39"/><rect x="26" y="954" width="2933" height="2" fill="#2a2e39"/><rect x="26" y="1052" width="2933" height="2" fill="#2a2e39"/><rect x="26" y="1151" width="2933" height="2" fill="#2a2e39"/><rect x="2795" y="68" width="2" height="1152" fill="#2a2e39"/><text x="25.25" y="47.6" font-size="29.6" fill="#d1d4dc" textLength="191.91" lengthAdjust="spacingAndGlyphs" stroke="#d1d4dc" stroke-width="0.6">AMBCrypto_TA</text><text x="226.25" y="47.6" font-size="29.6" fill="#d1d4dc" textLength="129.50" lengthAdjust="spacingAndGlyphs" stroke="#d1d4dc" stroke-width="0.6">published</text><text x="364.66" y="47.6" font-size="29.6" fill="#d1d4dc" textLength="32.86" lengthAdjust="spacingAndGlyphs" stroke="#d1d4dc" stroke-width="0.6">on</text><text x="406.23" y="47.6" font-size="29.6" fill="#d1d4dc" textLength="237.13" lengthAdjust="spacingAndGlyphs" stroke="#d1d4dc" stroke-width="0.6">TradingView.com,</text><text x="653.35" y="47.6" font-size="29.6" fill="#d1d4dc" textLength="46.21" lengthAdjust="spacingAndGlyphs" stroke="#d1d4dc" stroke-width="0.6">Jan</text><text x="707.70" y="47.6" font-size="29.6" fill="#d1d4dc" textLength="42.77" lengthAdjust="spacingAndGlyphs" stroke="#d1d4dc" stroke-width="0.6">04,</text><text x="758.96" y="47.6" font-size="29.6" fill="#d1d4dc" textLength="63.89" lengthAdjust="spacingAndGlyphs" stroke="#d1d4dc" stroke-width="0.6">2022</text><text x="831.86" y="47.6" font-size="29.6" fill="#d1d4dc" textLength="73.57" lengthAdjust="spacingAndGlyphs" stroke="#d1d4dc" stroke-width="0.6">16:55</text><text x="913.60" y="47.6" font-size="29.6" fill="#d1d4dc" textLength="130.92" lengthAdjust="spacingAndGlyphs" stroke="#d1d4dc" stroke-width="0.6">UTC+5:30</text><text x="43.71" y="114.9" font-size="28.8" fill="#b2b5be" textLength="94.84" lengthAdjust="spacingAndGlyphs" stroke="#b2b5be" stroke-width="0.6">Bitcoin</text><text x="149.90" y="114.9" font-size="28.8" fill="#b2b5be" textLength="9.00" lengthAdjust="spacingAndGlyphs" stroke="#b2b5be" stroke-width="0.6">/</text><text x="170.68" y="114.9" font-size="28.8" fill="#b2b5be" textLength="55.95" lengthAdjust="spacingAndGlyphs" stroke="#b2b5be" stroke-width="0.6">U.S.</text><text x="236.10" y="114.9" font-size="28.8" fill="#b2b5be" textLength="84.42" lengthAdjust="spacingAndGlyphs" stroke="#b2b5be" stroke-width="0.6">Dollar,</text><text x="332.41" y="114.9" font-size="28.8" fill="#b2b5be" textLength="41.57" lengthAdjust="spacingAndGlyphs" stroke="#b2b5be" stroke-width="0.6">4h,</text><text x="383.62" y="114.9" font-size="28.8" fill="#b2b5be" textLength="50.13" lengthAdjust="spacingAndGlyphs" stroke="#b2b5be" stroke-width="0.6">FTX</text><text x="451.81" y="114.9" font-size="28.8" fill="#b2b5be" textLength="19.60" lengthAdjust="spacingAndGlyphs" stroke="#b2b5be" stroke-width="0.6">O</text><text x="472.65" y="114.9" font-size="28.8" fill="#26a69a" textLength="78.28" lengthAdjust="spacingAndGlyphs" stroke="#26a69a" stroke-width="0.6">46549</text><text x="568.58" y="114.9" font-size="28.8" fill="#b2b5be" textLength="21.33" lengthAdjust="spacingAndGlyphs" stroke="#b2b5be" stroke-width="0.6">H</text><text x="589.15" y="114.9" font-size="28.8" fill="#26a69a" textLength="78.59" lengthAdjust="spacingAndGlyphs" stroke="#26a69a" stroke-width="0.6">46766</text><text x="685.66" y="114.9" font-size="28.8" fill="#b2b5be" textLength="15.89" lengthAdjust="spacingAndGlyphs" stroke="#b2b5be" stroke-width="0.6">L</text><text x="700.96" y="114.9" font-size="28.8" fill="#26a69a" textLength="78.12" lengthAdjust="spacingAndGlyphs" stroke="#26a69a" stroke-width="0.6">46295</text><text x="797.78" y="114.9" font-size="28.8" fill="#b2b5be" textLength="17.33" lengthAdjust="spacingAndGlyphs" stroke="#b2b5be" stroke-width="0.6">C</text><text x="815.45" y="114.9" font-size="28.8" fill="#26a69a" textLength="78.59" lengthAdjust="spacingAndGlyphs" stroke="#26a69a" stroke-width="0.6">46666</text><text x="912.93" y="114.9" font-size="28.8" fill="#26a69a" textLength="185.51" lengthAdjust="spacingAndGlyphs" stroke="#26a69a" stroke-width="0.6">+117 (+0.25%)</text><text x="44.91" y="156.5" font-size="28.8" fill="#b2b5be" textLength="195.14" lengthAdjust="spacingAndGlyphs" stroke="#b2b5be" stroke-width="0.6">20-50-200-SMA</text><text x="251.54" y="156.5" font-size="28.8" fill="#b2b5be" textLength="88.36" lengthAdjust="spacingAndGlyphs" stroke="#b2b5be" stroke-width="0.6">(close,</text><text x="349.08" y="156.5" font-size="28.8" fill="#b2b5be" textLength="42.04" lengthAdjust="spacingAndGlyphs" stroke="#b2b5be" stroke-width="0.6">20,</text><text x="401.70" y="156.5" font-size="28.8" fill="#b2b5be" textLength="41.70" lengthAdjust="spacingAndGlyphs" stroke="#b2b5be" stroke-width="0.6">50,</text><text x="453.79" y="156.5" font-size="28.8" fill="#b2b5be" textLength="55.94" lengthAdjust="spacingAndGlyphs" stroke="#b2b5be" stroke-width="0.6">200)</text><text x="529.25" y="156.5" font-size="28.8" fill="#ff0000" textLength="78.27" lengthAdjust="spacingAndGlyphs" stroke="#ff0000" stroke-width="0.6">46994</text><text x="626.26" y="156.5" font-size="28.8" fill="#00bcd4" textLength="77.26" lengthAdjust="spacingAndGlyphs" stroke="#00bcd4" stroke-width="0.6">47683</text><text x="722.95" y="156.5" font-size="28.8" fill="#00ff00" textLength="78.37" lengthAdjust="spacingAndGlyphs" stroke="#00ff00" stroke-width="0.6">48894</text><text x="2820.57" y="239.9" font-size="29.7" fill="#b2b5be" textLength="78.53" lengthAdjust="spacingAndGlyphs" stroke="#b2b5be" stroke-width="0.6">57500</text><text x="2820.57" y="352.8" font-size="29.7" fill="#b2b5be" textLength="78.53" lengthAdjust="spacingAndGlyphs" stroke="#b2b5be" stroke-width="0.6">53500</text><text x="2821.06" y="475.3" font-size="29.7" fill="#b2b5be" textLength="78.04" lengthAdjust="spacingAndGlyphs" stroke="#b2b5be" stroke-width="0.6">49500</text><text x="2821.06" y="676.5" font-size="29.7" fill="#b2b5be" textLength="78.04" lengthAdjust="spacingAndGlyphs" stroke="#b2b5be" stroke-width="0.6">43500</text><text x="2821.06" y="765.4" font-size="29.7" fill="#b2b5be" textLength="78.04" lengthAdjust="spacingAndGlyphs" stroke="#b2b5be" stroke-width="0.6">41100</text><text x="2819.36" y="109.0" font-size="29.7" fill="#b2b5be" textLength="78.74" lengthAdjust="spacingAndGlyphs" stroke="#b2b5be" stroke-width="0.6">62500</text><text x="2597.65" y="375.9" font-size="29.2" fill="#b2b5be" textLength="76.11" lengthAdjust="spacingAndGlyphs" stroke="#b2b5be" stroke-width="0.6">0.00%</text><text x="2675.11" y="375.9" font-size="29.2" fill="#b2b5be" textLength="99.69" lengthAdjust="spacingAndGlyphs" stroke="#b2b5be" stroke-width="0.6">(52129)</text><text x="2581.23" y="450.9" font-size="29.2" fill="#b2b5be" textLength="92.54" lengthAdjust="spacingAndGlyphs" stroke="#b2b5be" stroke-width="0.6">23.60%</text><text x="2675.11" y="450.9" font-size="29.2" fill="#b2b5be" textLength="99.69" lengthAdjust="spacingAndGlyphs" stroke="#b2b5be" stroke-width="0.6">(49691)</text><text x="2581.56" y="498.6" font-size="29.2" fill="#b2b5be" textLength="92.20" lengthAdjust="spacingAndGlyphs" stroke="#b2b5be" stroke-width="0.6">38.20%</text><text x="2675.11" y="498.6" font-size="29.2" fill="#b2b5be" textLength="99.69" lengthAdjust="spacingAndGlyphs" stroke="#b2b5be" stroke-width="0.6">(48183)</text><text x="2582.83" y="538.5" font-size="29.2" fill="#b2b5be" textLength="90.93" lengthAdjust="spacingAndGlyphs" stroke="#b2b5be" stroke-width="0.6">50.00%</text><text x="2675.11" y="538.5" font-size="29.2" fill="#b2b5be" textLength="99.69" lengthAdjust="spacingAndGlyphs" stroke="#b2b5be" stroke-width="0.6">(46965)</text><text x="2581.21" y="579.6" font-size="29.2" fill="#b2b5be" textLength="92.56" lengthAdjust="spacingAndGlyphs" stroke="#b2b5be" stroke-width="0.6">61.80%</text><text x="2675.11" y="579.6" font-size="29.2" fill="#b2b5be" textLength="99.69" lengthAdjust="spacingAndGlyphs" stroke="#b2b5be" stroke-width="0.6">(45746)</text><text x="2582.52" y="640.9" font-size="29.2" fill="#b2b5be" textLength="91.24" lengthAdjust="spacingAndGlyphs" stroke="#b2b5be" stroke-width="0.6">78.60%</text><text x="2675.11" y="640.9" font-size="29.2" fill="#b2b5be" textLength="99.69" lengthAdjust="spacingAndGlyphs" stroke="#b2b5be" stroke-width="0.6">(44010)</text><text x="2567.24" y="721.2" font-size="29.2" fill="#b2b5be" textLength="106.52" lengthAdjust="spacingAndGlyphs" stroke="#b2b5be" stroke-width="0.6">100.00%</text><text x="2675.11" y="721.2" font-size="29.2" fill="#b2b5be" textLength="99.69" lengthAdjust="spacingAndGlyphs" stroke="#b2b5be" stroke-width="0.6">(41800)</text><rect x="2843.2" y="83.1" width="69.5" height="45.5" rx="8" ry="8" fill="#191d28" stroke="#363a45" stroke-width="2"/><text x="2851.89" y="114.8" font-size="29.5" fill="#b2b5be" textLength="52.19" lengthAdjust="spacingAndGlyphs" stroke="#b2b5be" stroke-width="0.6">USD</text><path d="M2795 534 H2911 Q2915 534 2915 538 V577.6 H2795 Z" fill="#26a69a"/><path d="M2795 577.6 H2915 V617 Q2915 621 2911 621 H2795 Z" fill="#5b9cf6"/><text x="2820.75" y="567.2" font-size="29.4" fill="#ffffff" textLength="79.10" lengthAdjust="spacingAndGlyphs" stroke="#ffffff" stroke-width="0.6">46666</text><text x="2821.06" y="609.4" font-size="29.4" fill="#000000" textLength="77.87" lengthAdjust="spacingAndGlyphs" stroke="#000000" stroke-width="0.6">46643</text><g clip-path="url(#axr)"><text x="2819.60" y="802.7" font-size="29.7" fill="#b2b5be" textLength="74.66" lengthAdjust="spacingAndGlyphs" stroke="#b2b5be" stroke-width="0.6">80.00</text><text x="2820.22" y="894.6" font-size="29.7" fill="#b2b5be" textLength="74.03" lengthAdjust="spacingAndGlyphs" stroke="#b2b5be" stroke-width="0.6">40.00</text></g><g clip-path="url(#axo)"><text x="2819.80" y="968.2" font-size="29.7" fill="#b2b5be" textLength="15.71" lengthAdjust="spacingAndGlyphs" stroke="#b2b5be" stroke-width="0.6">0</text><path d="M2795 1014.5 H2924 Q2928.2 1014.5 2928.2 1018.7 V1052 H2795 Z" fill="#ffffff"/><text x="2821.50" y="1047.4" font-size="29.5" fill="#000000" textLength="90.90" lengthAdjust="spacingAndGlyphs" stroke="#000000" stroke-width="0.6">−2.08B</text></g><text x="2820.22" y="1091.4" font-size="29.7" fill="#b2b5be" textLength="74.03" lengthAdjust="spacingAndGlyphs" stroke="#b2b5be" stroke-width="0.6">40.00</text><text x="44.84" y="838.8" font-size="28.8" fill="#b2b5be" textLength="190.65" lengthAdjust="spacingAndGlyphs" stroke="#b2b5be" stroke-width="0.6">RSI (14, close)</text><text x="254.97" y="838.8" font-size="28.8" fill="#7e57c2" textLength="68.98" lengthAdjust="spacingAndGlyphs" stroke="#7e57c2" stroke-width="0.6">45.31</text><text x="44.57" y="1003.7" font-size="28.8" fill="#b2b5be" textLength="54.64" lengthAdjust="spacingAndGlyphs" stroke="#b2b5be" stroke-width="0.6">OBV</text><text x="118.41" y="1003.7" font-size="28.8" fill="#2962ff" textLength="106.08" lengthAdjust="spacingAndGlyphs" stroke="#2962ff" stroke-width="0.6">−1.621B</text><text x="45.14" y="1102" font-size="28.8" fill="#b2b5be" textLength="166.04" lengthAdjust="spacingAndGlyphs" stroke="#b2b5be" stroke-width="0.6">ADX (14, 14)</text><text x="230.68" y="1102" font-size="28.8" fill="#ff5252" textLength="72.84" lengthAdjust="spacingAndGlyphs" stroke="#ff5252" stroke-width="0.6">13.55</text><text x="122.02" y="1197.1" font-size="28.8" fill="#b2b5be" textLength="50.58" lengthAdjust="spacingAndGlyphs" stroke="#b2b5be" stroke-width="0.6">Dec</text><text x="427.49" y="1197.1" font-size="28.8" fill="#b2b5be" textLength="16.01" lengthAdjust="spacingAndGlyphs" stroke="#b2b5be" stroke-width="0.6">6</text><text x="600.20" y="1197.1" font-size="28.8" fill="#b2b5be" textLength="74.68" lengthAdjust="spacingAndGlyphs" stroke="#b2b5be" stroke-width="0.6">13:30</text><text x="821.72" y="1197.1" font-size="28.8" fill="#b2b5be" textLength="32.80" lengthAdjust="spacingAndGlyphs" stroke="#b2b5be" stroke-width="0.6">13</text><text x="1003.10" y="1197.1" font-size="28.8" fill="#b2b5be" textLength="74.68" lengthAdjust="spacingAndGlyphs" stroke="#b2b5be" stroke-width="0.6">13:30</text><text x="1225.42" y="1197.1" font-size="28.8" fill="#b2b5be" textLength="32.82" lengthAdjust="spacingAndGlyphs" stroke="#b2b5be" stroke-width="0.6">20</text><text x="1406.10" y="1197.1" font-size="28.8" fill="#b2b5be" textLength="74.68" lengthAdjust="spacingAndGlyphs" stroke="#b2b5be" stroke-width="0.6">13:30</text><text x="1629.59" y="1197.1" font-size="28.8" fill="#b2b5be" textLength="32.82" lengthAdjust="spacingAndGlyphs" stroke="#b2b5be" stroke-width="0.6">27</text><text x="1899.48" y="1197.1" font-size="28.8" fill="#b2b5be" font-weight="bold" textLength="69.21" lengthAdjust="spacingAndGlyphs" stroke="#b2b5be" stroke-width="0.6">2022</text><text x="2157.01" y="1197.1" font-size="28.8" fill="#b2b5be" textLength="16.03" lengthAdjust="spacingAndGlyphs" stroke="#b2b5be" stroke-width="0.6">5</text><text x="2436.05" y="1197.1" font-size="28.8" fill="#b2b5be" textLength="32.81" lengthAdjust="spacingAndGlyphs" stroke="#b2b5be" stroke-width="0.6">10</text><text x="2616.10" y="1197.1" font-size="28.8" fill="#b2b5be" textLength="74.68" lengthAdjust="spacingAndGlyphs" stroke="#b2b5be" stroke-width="0.6">13:30</text><text x="112.41" y="462.6" font-size="28.5" fill="#c3c3c9" textLength="160.25" lengthAdjust="spacingAndGlyphs" stroke="#c3c3c9" stroke-width="0.6">Bearish flag</text><g fill="#d1d4dc"><path d="M24.9 1251.7 H44.8 V1275.9 H34.7 V1260.7 H24.9 Z"/><circle cx="52.3" cy="1256.4" r="5"/><path d="M63.4 1251.1 H74 L64 1275.9 H53.2 Z"/></g><text x="81.99" y="1276.6" font-size="33.1" fill="#d1d4dc" textLength="176.64" lengthAdjust="spacingAndGlyphs" stroke="#d1d4dc" stroke-width="0.6">TradingView</text>
</svg>
</body></html>
